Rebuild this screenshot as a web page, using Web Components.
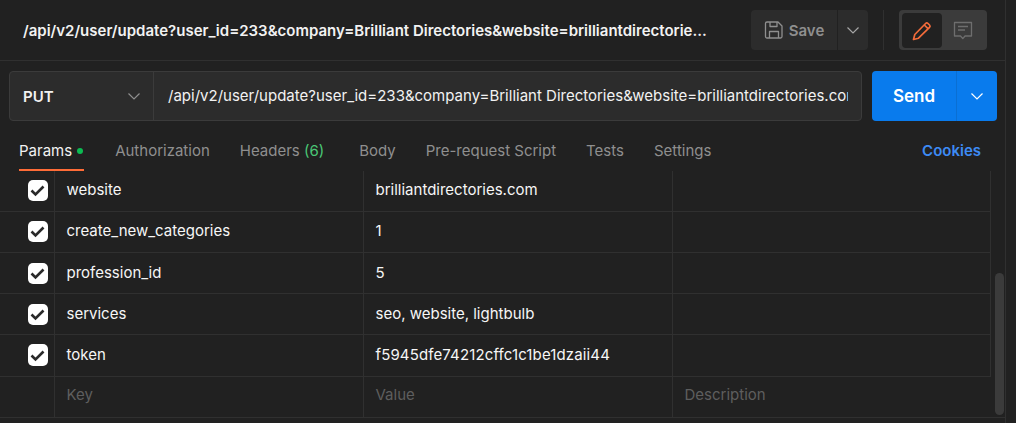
<!DOCTYPE html>
<html><head><meta charset="utf-8"><style>
html,body{margin:0;padding:0;background:#212121;}
body{font-family:Inter,"Liberation Sans",sans-serif;font-size:15px;color:#fff;width:1016px;height:423px;overflow:hidden;}
</style></head><body>
<pm-app></pm-app>
<template id="t-app"><style>
:host{display:block;width:1006px;height:423px;box-sizing:border-box;border-right:1px solid #303030;position:relative;}
</style>
<pm-header></pm-header><pm-urlbar></pm-urlbar><pm-tabs></pm-tabs>
<pm-table></pm-table>
</template>
<template id="t-header"><style>
:host{display:flex;align-items:center;height:60px;border-bottom:1px solid #303030;box-sizing:content-box;padding-left:23px;padding-right:18px;}
.title{flex:1;font-weight:600;font-size:15px;line-height:20px;white-space:nowrap;color:#f2f2f2;margin-top:2px;}
.save{display:flex;height:40px;gap:1px;margin-right:15px;}
.s1{width:86px;background:#2c2c2c;border-radius:4px 0 0 4px;display:flex;align-items:center;justify-content:center;gap:5px;color:#8f8f8f;font-weight:600;font-size:15px;box-sizing:border-box;}
.s2{width:30px;background:#2c2c2c;border-radius:0 4px 4px 0;display:flex;align-items:center;justify-content:center;}
.div{width:1px;height:40px;background:#303030;margin-right:15px;}
.toggle{width:88px;height:40px;background:#3b3b3b;border-radius:4px;box-sizing:border-box;padding:3px;display:flex;}
.on{width:40px;height:35px;background:#212121;border-radius:4px;display:flex;align-items:center;justify-content:center;}
.off{flex:1;display:flex;align-items:center;justify-content:center;height:35px;}
svg{display:block;}
</style>
<div class="title">/api/v2/user/update?user_id=233&amp;company=Brilliant Directories&amp;website=brilliantdirectorie...</div>
<div class="save"><div class="s1"><svg width="20" height="20" viewBox="0 0 20 20" fill="none" stroke="#8f8f8f" stroke-width="1.3" stroke-linejoin="round"><path d="M1.500 3.500A1.500 1.500 0 0 1 3 2H14l4 4v10.500A1.500 1.500 0 0 1 16.500 18H3A1.500 1.500 0 0 1 1.500 16.500Z"/><path d="M6 2v4.500h7V2"/><path d="M5.500 18v-6.500h9V18"/></svg>Save</div>
<div class="s2"><svg width="14" height="14" viewBox="0 0 14 14" fill="none" stroke="#a6a6a6" stroke-width="1.2"><path d="M1.500 4.500l5.500 5.500 5.500-5.500"/></svg></div></div>
<div class="div"></div>
<div class="toggle"><div class="on"><svg width="20" height="20" viewBox="0 0 20 20" fill="none" stroke="#f26b3a" stroke-width="1.700" stroke-linejoin="round"><path d="M1.500 18.500l1.300-5L13.600 2.500a1.700 1.700 0 0 1 2.400 0l1.500 1.500a1.700 1.700 0 0 1 0 2.400L6.500 17.200Z"/><path d="M12.300 4l3.700 3.700"/></svg></div>
<div class="off"><svg width="20" height="20" viewBox="0 0 20 20" fill="none" stroke="#6e6e6e" stroke-width="1.300" stroke-linejoin="round"><path d="M1.500 1.500h17v13.500h-6.500l-2.200 2.600-2.300-2.600H1.500Z"/><path d="M5 5.500h10M5 9h7"/></svg></div></div>
</template>
<template id="t-urlbar"><style>
:host{display:flex;height:50px;margin:10px 8px 0 9px;gap:10px;}
.box{width:853px;box-sizing:border-box;display:flex;background:#2c2c2c;border:1px solid #3b3b3b;border-radius:4px;}
.m{width:144px;flex:none;box-sizing:border-box;border-right:1px solid #3b3b3b;display:flex;align-items:center;justify-content:space-between;padding:0 12px 0 13px;font-weight:600;font-size:15px;color:#f2f2f2;}
.u{flex:1;min-width:0;overflow:hidden;white-space:nowrap;padding-left:14px;margin-right:13px;line-height:47px;color:#f2f2f2;font-size:15px;}
.send{width:125px;background:#097bed;border-radius:4px;display:flex;font-weight:600;font-size:17px;color:#fff;}
.a{width:84px;display:flex;align-items:center;justify-content:center;border-right:1px solid #0a6fd3;box-sizing:content-box;}
.b{flex:1;display:flex;align-items:center;justify-content:center;}
svg{display:block;}
</style>
<div class="box"><div class="m">PUT<svg width="14" height="14" viewBox="0 0 14 14" fill="none" stroke="#8f8f8f" stroke-width="1.2"><path d="M1.500 4.500l5.500 5.500 5.500-5.500"/></svg></div>
<div class="u">/api/v2/user/update?user_id=233&amp;company=Brilliant Directories&amp;website=brilliantdirectories.com</div></div>
<div class="send"><div class="a">Send</div><div class="b"><svg width="14" height="14" viewBox="0 0 14 14" fill="none" stroke="#fff" stroke-width="1.200"><path d="M1.500 4.500l5.500 5.500 5.500-5.500"/></svg></div></div>
</template>
<template id="t-tabs"><style>
:host{display:flex;height:50px;padding:0 24px 0 19px;gap:30px;align-items:stretch;box-sizing:border-box;color:#8f8f8f;font-size:15px;}
.t{display:flex;align-items:center;gap:5px;box-sizing:border-box;height:50px;padding-top:9px;}
.act{color:#f2f2f2;border-bottom:2px solid #ff6c37;padding-top:11px;margin-right:1px;}
.dot{width:6px;height:6px;border-radius:50%;background:#0cbb52;margin:1px 1px 0 0;}
.g{color:#4ac776;}
.h{gap:0;margin-right:5px;}
.c{margin-left:auto;color:#3d8bf5;font-weight:600;}
</style>
<div class="t act">Params<span class="dot"></span></div>
<div class="t">Authorization</div>
<div class="t h">Headers&nbsp;<span class="g">(6)</span></div>
<div class="t">Body</div>
<div class="t">Pre-request Script</div>
<div class="t">Tests</div>
<div class="t">Settings</div>
<div class="t c">Cookies</div>
</template>
<template id="t-table"><style>
:host{display:block;position:relative;height:246px;border-bottom:1px solid #303030;}
.scroll{position:absolute;left:995px;top:102px;width:9px;height:142px;border-radius:5px;background:#3b3b3b;}
</style>
<pm-row k="website" v="brilliantdirectories.com"></pm-row>
<pm-row k="create_new_categories" v="1"></pm-row>
<pm-row k="profession_id" v="5" low></pm-row>
<pm-row k="services" v="seo, website, lightbulb" low></pm-row>
<pm-row k="token" v="f5945dfe74212cffc1c1be1dzaii44" tall></pm-row>
<pm-row k="Key" v="Value" d="Description" ph></pm-row>
<div class="scroll"></div>
</template>
<template id="t-row"><style>
:host{display:grid;grid-template-columns:55px 309px 309px 318px;width:991px;height:41px;box-sizing:border-box;border-bottom:1px solid #303030;font-size:15px;color:#f6f6f6;}
:host([tall]){height:42px;}
:host([tall]) .v{letter-spacing:.13px;}
:host([ph]){color:#5e5e5e;border-bottom:0;}
.c{border-right:1px solid #303030;display:flex;align-items:center;padding:0 0 3px 11.5px;box-sizing:border-box;min-width:0;white-space:nowrap;}
:host([low]) .c{padding-bottom:1px;}
:host([ph]) .c{padding-bottom:7px;}
.c.c0{padding:0 0 1px 27.67px;}
:host([low]) .c.c0{padding:1px 0 0 27.67px;}
.box{width:20.67px;height:21.5px;background:#fff;border-radius:5px;display:flex;align-items:center;justify-content:center;}
:host([ph]) .c:last-child{border-right:0;}
svg{display:block;}
</style>
<div class="c c0"></div><div class="c k"></div><div class="c v"></div><div class="c d"></div>
</template>
<script>
function tpl(id){return document.getElementById(id).content.cloneNode(true);}
class Base extends HTMLElement{constructor(){super();this.attachShadow({mode:'open'}).appendChild(tpl(this.constructor.tid));}}
class PmRow extends Base{static tid='t-row';connectedCallback(){
 const s=this.shadowRoot;s.querySelector('.k').textContent=this.getAttribute('k');s.querySelector('.v').textContent=this.getAttribute('v');s.querySelector('.d').textContent=this.getAttribute('d')||'';
 if(!this.hasAttribute('ph'))s.querySelector('.c0').innerHTML='<div class="box"><svg width="15" height="15" viewBox="0 0 15 15" fill="none" stroke="#2a2a2a" stroke-width="2.600"><path d="M1.500 7.500l4 4 8-8"/></svg></div>';
}}
for(const [n,c] of [['pm-app',class extends Base{static tid='t-app'}],['pm-header',class extends Base{static tid='t-header'}],['pm-urlbar',class extends Base{static tid='t-urlbar'}],['pm-tabs',class extends Base{static tid='t-tabs'}],['pm-table',class extends Base{static tid='t-table'}],['pm-row',PmRow]])customElements.define(n,c);
</script>
</body></html>
